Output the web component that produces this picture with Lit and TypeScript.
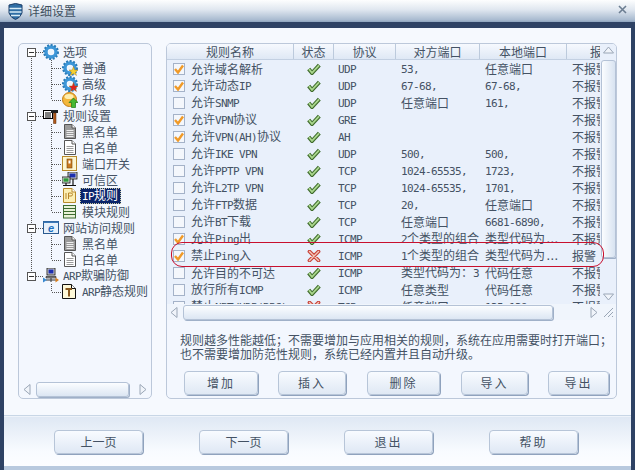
import { LitElement, html, css, svg } from "lit";
import { customElement } from "lit/decorators.js";

const okIcon = html`<svg width="14" height="12" viewBox="0 0 14 12"><path d="M1.7 6 L5 10 L12.3 2.2" fill="none" stroke="#3f6b2c" stroke-width="4"/><path d="M2 6.2 L5 9.8 L12 2.4" fill="none" stroke="#a9d68c" stroke-width="1.8"/></svg>`;
const noIcon = html`<svg width="14" height="12" viewBox="0 0 14 12"><path d="M2.5 1.5 L11.5 10.5 M11.5 1.5 L2.5 10.5" fill="none" stroke="#c8443c" stroke-width="3.8" stroke-linecap="round"/><path d="M2.5 1.5 L11.5 10.5 M11.5 1.5 L2.5 10.5" fill="none" stroke="#f6c8b8" stroke-width="1.4" stroke-linecap="round"/></svg>`;

const gear = (badge: unknown = "") => svg`<circle cx="8" cy="8" r="5" fill="none" stroke="#3d97d8" stroke-width="3.4"/><circle cx="8" cy="8" r="7" fill="none" stroke="#2a7cb8" stroke-width="2" stroke-dasharray="2 1.6"/><circle cx="8" cy="8" r="2.2" fill="#eef6fb"/>${badge}`;
const star = (c: string) => svg`<path d="M11.5 6.5 L12.8 10 L16 10 L13.5 12.2 L14.5 15.5 L11.5 13.6 L8.5 15.5 L9.5 12.2 L7 10 L10.2 10 Z" fill="${c}" stroke="#a07010" stroke-width=".4"/>`;
const sheet = (fill: string, lines: string) => svg`<path d="M2.5 .5 H10 L13.5 4 V14.5 H2.5 Z" fill="${fill}" stroke="#555"/><path d="M10 .5 V4 H13.5" fill="#fff" stroke="#555"/><path d="M4.5 6.5 H11.5 M4.5 8.5 H11.5 M4.5 10.5 H11.5 M4.5 12.5 H11.5" stroke="${lines}"/>`;

const icons: Record<string, unknown> = {
  gear: gear(),
  normal: gear(star("#f6d030")),
  high: gear(star("#e02020")),
  up: svg`<circle cx="7.5" cy="7.5" r="7" fill="#f3b73c" stroke="#c07a14"/><ellipse cx="7" cy="4.5" rx="4.5" ry="2.6" fill="#fdeeb0"/><path d="M11.5 6 L16 10.5 H13.5 V15.5 H9.5 V10.5 H7 Z" fill="#46b832" stroke="#1d7a18" stroke-width=".7"/>`,
  rules: svg`<rect x=".5" y="2.5" width="9" height="8" fill="#fff" stroke="#000"/><path d="M2 5 H8 M2 7 H8 M2 9 H8" stroke="#000"/><path d="M8 2 H15 V5 H8 Z" fill="#222"/><path d="M10.5 5 H13 V15.5 H10.5 Z" fill="#b05818" stroke="#5a2a08" stroke-width=".5"/>`,
  black: sheet("#9a9a9a", "#eee"),
  white: sheet("#fff", "#9a9a9a"),
  port: svg`<rect x=".5" y=".5" width="14" height="14" fill="#fdf6d0" stroke="#b88a2a"/><rect x="5" y="3" width="5" height="9" fill="#c87a20" stroke="#7a4408" stroke-width=".6"/><rect x="6.5" y="4.5" width="2" height="3" fill="#fff"/>`,
  trust: svg`<rect x="6" y="0" width="9" height="7" fill="#cfcfcf" stroke="#111" stroke-width=".8"/><rect x="7.5" y="1.5" width="6" height="4" fill="#1c2fb0"/><rect x="0" y="5" width="8" height="6" fill="#d8d8d8" stroke="#111" stroke-width=".8"/><rect x="1.5" y="6.3" width="5" height="3.4" fill="#2f9a3a"/><path d="M1 13.5 H14 M4 11 V13.5 M11 7 V13.5" stroke="#111" stroke-width="1.2"/>`,
  ip: svg`<path d="M1.5 .5 H10 L13.5 4 V14.5 H1.5 Z" fill="#fcefb4" stroke="#b88a2a"/><path d="M10 .5 V4 H13.5" fill="#fff" stroke="#b88a2a"/><path d="M4 5 V11 M6.5 11 V5 H9 A1.5 1.5 0 0 1 9 8 H6.5" fill="none" stroke="#b8862a"/>`,
  module: svg`<rect x="1.5" y="1.5" width="12" height="12.5" fill="#e8f2d8" stroke="#3d6b30"/><path d="M1.5 4.5 H13.5 M1.5 7.5 H13.5 M1.5 10.5 H13.5" stroke="#3d6b30"/>`,
  web: svg`<rect x=".5" y="1.5" width="15" height="12" fill="#e6f0fa" stroke="#2a5a90"/><rect x=".5" y="1.5" width="15" height="1.5" fill="#3a78b8"/><text x="8" y="12" text-anchor="middle" font-size="11" font-weight="700" font-style="italic" font-family="Liberation Sans" fill="#1c6fc0">e</text>`,
  arp: svg`<rect x="4" y="0" width="8" height="7" fill="#cfcfcf" stroke="#111" stroke-width=".8"/><rect x="5.5" y="1.5" width="5" height="4" fill="#1c2fb0"/><path d="M3 8.5 H13 V10 H3 Z" fill="#999" stroke="#111" stroke-width=".6"/><path d="M3 12 H13 M8 10 V14" stroke="#333"/><path d="M0 9.5 L4 12 L0 14.5 Z" fill="#3a8ad0"/><path d="M16 12 L12.5 9.5 V14.5 Z" fill="#d88020"/>`,
  arprule: svg`<path d="M.5 .5 H9.5 L13.5 4.5 V14.5 H.5 Z" fill="#fdf8d8" stroke="#111"/><path d="M9.5 .5 V4.5 H13.5" fill="#fff" stroke="#111"/><path d="M3.5 4 H10 V6 H8 V12.5 H6 V6 H3.5 Z" fill="#8a5a20"/>`,
};

const treeRows: [number, string, string, boolean?][] = [
  [0, "gear", "选项"], [1, "normal", "普通"], [1, "high", "高级"], [1, "up", "升级"],
  [0, "rules", "规则设置"], [1, "black", "黑名单"], [1, "white", "白名单"], [1, "port", "端口开关"],
  [1, "trust", "可信区"], [1, "ip", "IP规则", true], [1, "module", "模块规则"],
  [0, "web", "网站访问规则"], [1, "black", "黑名单"], [1, "white", "白名单"],
  [0, "arp", "ARP欺骗防御"], [1, "arprule", "ARP静态规则"],
];

const R = "不报警";
const rows: [boolean, boolean, string, string, string, string, string][] = [
  [true, true, "允许域名解析", "UDP", "53,", "任意端口", R],
  [true, true, "允许动态IP", "UDP", "67-68,", "67-68,", R],
  [false, true, "允许SNMP", "UDP", "任意端口", "161,", R],
  [true, true, "允许VPN协议", "GRE", "", "", R],
  [true, true, "允许VPN(AH)协议", "AH", "", "", R],
  [false, true, "允许IKE VPN", "UDP", "500,", "500,", R],
  [false, true, "允许PPTP VPN", "TCP", "1024-65535,", "1723,", R],
  [false, true, "允许L2TP VPN", "TCP", "1024-65535,", "1701,", R],
  [false, true, "允许FTP数据", "TCP", "20,", "任意端口", R],
  [false, true, "允许BT下载", "TCP", "任意端口", "6681-6890,", R],
  [true, true, "允许Ping出", "ICMP", "2个类型的组合", "类型代码为...", R],
  [true, false, "禁止Ping入", "ICMP", "1个类型的组合", "类型代码为...", "报警"],
  [false, true, "允许目的不可达", "ICMP", "类型代码为：3", "代码任意", R],
  [false, true, "放行所有ICMP", "ICMP", "任意类型", "代码任意", R],
  [false, false, "禁止NBT/UDP(RPC)", "TCP", "任意端口", "135-139,", R],
];

/** Latin runs were half-width (6px per char) in the original; wrap them so they keep that pitch. */
const t = (s: string) =>
  s.split(/([\x20-\x7e]+)/).filter(Boolean).map((p) =>
    /^[\x20-\x7e]+$/.test(p) ? html`<span class="en ${p === "..." ? "dots" : ""}">${p}</span>` : p);

@customElement("app-root")
export class AppRoot extends LitElement {
  static styles = css`
    :host { display: block; width: 635px; height: 470px; overflow: hidden; position: relative; background: #2e4264;
      font: 12px/14px "Noto Sans CJK SC", sans-serif; color: #445264; }
    .en { font-family: "DejaVu Sans Mono", monospace; font-size: 11px; letter-spacing: -0.62px; }
    .en.dots { letter-spacing: -2.6px; }
    .title { height: 22px; display: flex; align-items: center; background: linear-gradient(#fdfefe, #dfe6ef 45%, #a9bbd0 90%, #8ea4bd);
      padding-left: 8px; gap: 5px; color: #40505f; box-sizing: border-box; }
    .title .x { margin-left: auto; margin-right: 8px; margin-top: -4px; }
    .frame { margin: 6px 4px 0; height: 438px; background: linear-gradient(#eef4fd, #fbfdff 5px); display: flex; flex-direction: column; }
    .main { height: 388px; box-sizing: border-box; padding: 15px 14px 0; display: flex; gap: 14px; border-bottom: 1px solid #c8d6e6; background: #f6f9fe; }
    .panel { border: 1px solid #bcc8da; border-radius: 5px; box-sizing: border-box; height: 356px; background: #f3f7fe; position: relative; overflow: hidden; }
    .left { width: 134px; flex: none; display: flex; flex-direction: column; }
    .tree { flex: 1; position: relative; }
    .guides { position: absolute; left: 0; top: 0; }
    .node { height: 16px; display: flex; align-items: center; white-space: nowrap; position: relative; }
    .node.l0 { padding-left: 8px; }
    .node.l1 { padding-left: 43px; }
    .exp { width: 9px; height: 9px; box-sizing: border-box; border: 1px solid #555; background: #fff; position: relative; margin-right: 7px; flex: none; }
    .exp::after { content: ""; position: absolute; left: 1px; right: 1px; top: 3px; height: 1px; background: #333; }
    .ico { width: 16px; height: 16px; flex: none; display: block; }
    .lab { margin-left: 3px; padding: 0 1px; }
    .lab.sel { background: #0a246a; color: #fff; outline: 1px dotted #c9c9a0; outline-offset: -1px; margin-left: 2px; padding: 0 3px 0 2px; }
    .hbar { display: flex; align-items: center; flex: none; height: 16px; }
    .tree-bar { margin-bottom: 1px; padding-left: 3px; }
    .tree-bar .thumb { width: 93px; margin: 0 8px 0 3px; }
    .thumb { height: 15px; box-sizing: border-box; border: 1px solid #b4c2d6; border-radius: 3px; background: linear-gradient(#fbfdff, #dce6f3); box-shadow: 1px 1px 0 #9fb0c8; flex: none; }
    .right { flex: 1; display: flex; flex-direction: column; }
    .grid-wrap { height: 276px; flex: none; display: grid; grid-template-columns: 433px 16px; grid-template-rows: 260px 16px; background: #e9f0fb; }
    .grid { overflow: hidden; position: relative; }
    .row { display: grid; grid-template-columns: 127px 40px 62px 84px 87px 70px; height: 17px; align-items: center; white-space: nowrap; overflow: hidden; }
    .head { height: 15px; background: linear-gradient(#f6f9fe, #dfe8f5); border-bottom: 1px solid #c3d0e2; }
    .head > span { text-align: center; border-right: 1px solid #bccadc; height: 15px; line-height: 15px; box-sizing: border-box; overflow: hidden; }
    .head > span:last-child { border: 0; }
    .name { display: flex; align-items: center; gap: 6px; padding-left: 6px; }
    .cb { width: 12px; height: 12px; box-sizing: border-box; border: 1px solid #a4b2c8; background: #f4f7fc; display: block; flex: none; }
    .st { display: flex; justify-content: center; margin-left: -1px; }
    .cell { overflow: hidden; }
    .proto { padding-left: 4px; }
    .rem { padding-left: 5px; }
    .loc { padding-left: 5px; }
    .alarm { padding-left: 5px; }
    .vbar { display: flex; flex-direction: column; align-items: center; }
    .varrow { height: 16px; display: flex; align-items: center; justify-content: center; flex: none; }
    .varrow.up { align-items: flex-start; padding-top: 1px; height: 15px; }
    .vthumb { width: 15px; height: 198px; flex: none; box-sizing: border-box; border: 1px solid #b4c2d6; border-radius: 3px; background: linear-gradient(90deg, #fbfdff, #d8e3f1); box-shadow: 1px 1px 0 #9fb0c8; }
    .vspace { flex: 1; }
    .grid-bar { padding-left: 2px; background: #f0f5fc; }
    .grid-bar .thumb { width: 370px; margin: 0 35px 0 3px; }
    .corner { background: #f0f5fc; display: flex; align-items: center; justify-content: center; }
    .mark { position: absolute; left: 4px; top: 198px; width: 433px; height: 25px; box-sizing: border-box; border: 1px solid #c8102e; border-radius: 11px; pointer-events: none; }
    .note { margin: 13px 0 0 13px; line-height: 14px; white-space: nowrap; }
    .actions { display: flex; margin: 10px 0 0 17px; }
    button { font: inherit; color: #445264; height: 24px; padding: 0; border: 1px solid #b7c5d8; border-radius: 4px; background: linear-gradient(#f8fbff, #dfe8f4); box-shadow: 1px 1px 0 #8fa2bd; letter-spacing: 2px; flex: none; }
    .actions button:nth-child(1) { width: 74px; margin-right: 20px; }
    .actions button:nth-child(2) { width: 68px; margin-right: 21px; }
    .actions button:nth-child(3) { width: 73px; margin-right: 21px; }
    .actions button:nth-child(4) { width: 67px; margin-right: 20px; }
    .actions button:nth-child(5) { width: 61px; }
    .foot { flex: 1; display: flex; gap: 56px; padding: 13px 0 0 50px; background: linear-gradient(#dfe8f4, #f8fbff 70%, #fcfdff); border-top: 1px solid #eef3fa; }
    .foot button { width: 89px; letter-spacing: 0; }
    .foot button.sp { letter-spacing: 2px; }
    .strip { position: absolute; left: 4px; right: 4px; bottom: 0; height: 4px; background: #b8c9de; }
  `;

  private arrow(d: string) {
    return html`<svg width="11" height="11" viewBox="0 0 11 11"><path d="${d}" fill="#f0f4fa" stroke="#9aa6b6"/></svg>`;
  }

  render() {
    const L = "M8 .5 V10.5 L2 5.5 Z", Rr = "M3 .5 V10.5 L9 5.5 Z", U = "M.5 8 H10.5 L5.5 2 Z", D = "M.5 3 H10.5 L5.5 9 Z";
    return html`
      <div class="title">
        <svg width="15" height="17" viewBox="0 0 15 17"><path d="M1 2 Q7.5 -1 14 2 V10 Q12 15 7.5 16.5 Q3 15 1 10 Z" fill="#2f6ea5" stroke="#1e3f68"/><path d="M1.5 5.5 H13.5 M1.5 9 H13.5 M3 12.5 H12" stroke="#d8ecf6" stroke-width="1.4"/></svg>
        <span>详细设置</span>
        <svg class="x" width="9" height="9" viewBox="0 0 9 9"><path d="M1 1 L8 8 M8 1 L1 8" stroke="#6c7e92" stroke-width="1.6"/></svg>
      </div>
      <div class="frame">
        <div class="main">
          <div class="panel left">
            <div class="tree">
              <svg class="guides" width="60" height="260" stroke="#555" stroke-dasharray="1 1" fill="none" shape-rendering="crispEdges">
                <path d="M12.5 8 V232"/>
                <path d="M32.5 16 V56 M32.5 80 V168 M32.5 192 V216 M32.5 240 V248"/>
                <path d="M32.5 24.5 H42 M32.5 40.5 H42 M32.5 56.5 H42 M32.5 88.5 H42 M32.5 104.5 H42 M32.5 120.5 H42 M32.5 136.5 H42 M32.5 152.5 H42 M32.5 168.5 H42 M32.5 200.5 H42 M32.5 216.5 H42 M32.5 248.5 H42"/>
                <path d="M17 8.5 H24 M17 72.5 H24 M17 184.5 H24 M17 232.5 H24"/>
              </svg>
              ${treeRows.map(([lv, ic, txt, sel]) => html`
                <div class="node ${lv ? "l1" : "l0"}">
                  ${lv ? "" : html`<span class="exp"></span>`}
                  <svg class="ico" viewBox="0 0 16 16">${icons[ic]}</svg>
                  <span class="lab ${sel ? "sel" : ""}">${t(txt)}</span>
                </div>`)}
            </div>
            <div class="hbar tree-bar">${this.arrow(L)}<div class="thumb"></div>${this.arrow(Rr)}</div>
          </div>
          <div class="panel right">
            <div class="grid-wrap">
              <div class="grid">
                <div class="row head"><span>规则名称</span><span>状态</span><span>协议</span><span>对方端口</span><span>本地端口</span><span>报警</span></div>
                ${rows.map(([c, ok, n, p, a, b, al]) => html`
                  <div class="row">
                    <div class="name">
                      <svg class="cb" viewBox="0 0 10 10">${c ? svg`<path d="M1 5 L4 8.5 L9 1.5" fill="none" stroke="#f09a28" stroke-width="2.4"/>` : ""}</svg>
                      <span>${t(n)}</span>
                    </div>
                    <div class="st">${ok ? okIcon : noIcon}</div>
                    <div class="cell proto">${t(p)}</div>
                    <div class="cell rem">${t(a)}</div>
                    <div class="cell loc">${t(b)}</div>
                    <div class="cell alarm">${al}</div>
                  </div>`)}
              </div>
              <div class="vbar">
                <div class="varrow up">${this.arrow(U)}</div>
                <div class="vthumb"></div>
                <div class="vspace"></div>
                <div class="varrow">${this.arrow(D)}</div>
              </div>
              <div class="hbar grid-bar">${this.arrow(L)}<div class="thumb"></div>${this.arrow(Rr)}</div>
              <div class="corner"><svg width="11" height="11" viewBox="0 0 11 11"><path d="M1 10 L10 1 M5 10 L10 5 M9 10 L10 9" stroke="#9aa6b6"/></svg></div>
            </div>
            <div class="mark"></div>
            <div class="note">规则越多性能越低；不需要增加与应用相关的规则，系统在应用需要时打开端口；<br>也不需要增加防范性规则，系统已经内置并且自动升级。</div>
            <div class="actions"><button>增加</button><button>插入</button><button>删除</button><button>导入</button><button>导出</button></div>
          </div>
        </div>
        <div class="foot"><button>上一页</button><button>下一页</button><button class="sp">退出</button><button class="sp">帮助</button></div>
      </div>
      <div class="strip"></div>`;
  }
}
